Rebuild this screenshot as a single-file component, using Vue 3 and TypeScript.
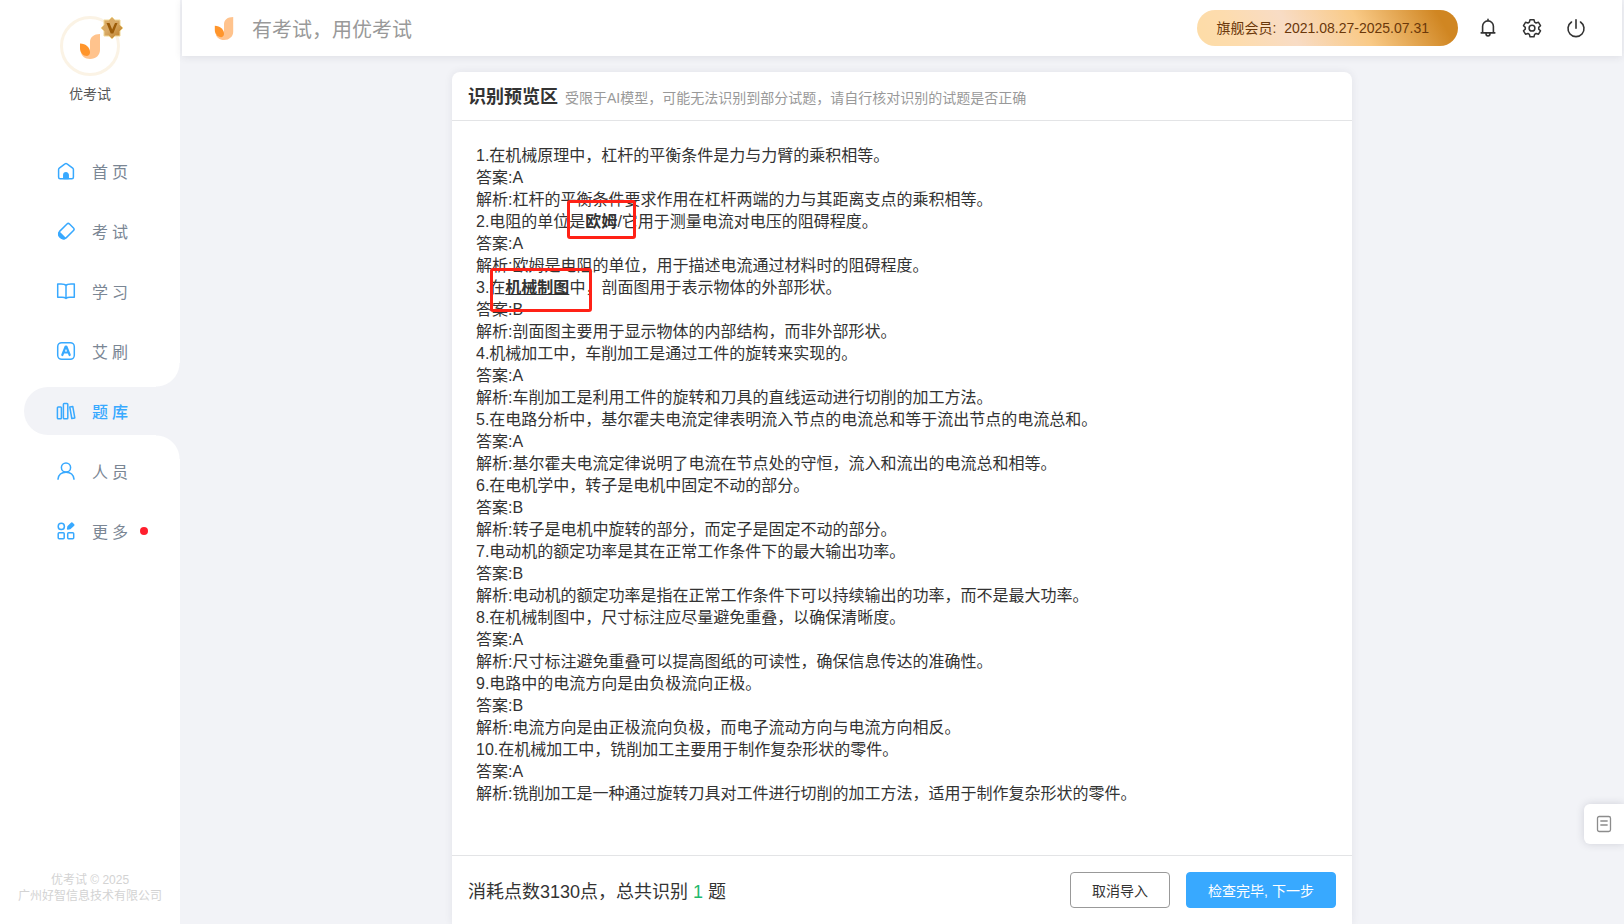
<script setup lang="ts">
interface NavItem {
  label: string
  icon: string
  active?: boolean
  dot?: boolean
}

const navItems: NavItem[] = [
  { label: '首页', icon: 'home' },
  { label: '考试', icon: 'exam' },
  { label: '学习', icon: 'study' },
  { label: '艾刷', icon: 'drill' },
  { label: '题库', icon: 'bank', active: true },
  { label: '人员', icon: 'people' },
  { label: '更多', icon: 'more', dot: true },
]

interface Segment {
  text: string
  mark?: string
}

const lines: Segment[][] = [
  [{ text: '1.在机械原理中，杠杆的平衡条件是力与力臂的乘积相等。' }],
  [{ text: '答案:A' }],
  [{ text: '解析:杠杆的平衡条件要求作用在杠杆两端的力与其距离支点的乘积相等。' }],
  [
    { text: '2.电阻的单位是' },
    { text: '欧姆', mark: 'mark-unit' },
    { text: '/它用于测量电流对电压的阻碍程度。' },
  ],
  [{ text: '答案:A' }],
  [{ text: '解析:欧姆是电阻的单位，用于描述电流通过材料时的阻碍程度。' }],
  [
    { text: '3.在' },
    { text: '机械制图', mark: 'mark-drawing' },
    { text: '中，剖面图用于表示物体的外部形状。' },
  ],
  [{ text: '答案:B' }],
  [{ text: '解析:剖面图主要用于显示物体的内部结构，而非外部形状。' }],
  [{ text: '4.机械加工中，车削加工是通过工件的旋转来实现的。' }],
  [{ text: '答案:A' }],
  [{ text: '解析:车削加工是利用工件的旋转和刀具的直线运动进行切削的加工方法。' }],
  [{ text: '5.在电路分析中，基尔霍夫电流定律表明流入节点的电流总和等于流出节点的电流总和。' }],
  [{ text: '答案:A' }],
  [{ text: '解析:基尔霍夫电流定律说明了电流在节点处的守恒，流入和流出的电流总和相等。' }],
  [{ text: '6.在电机学中，转子是电机中固定不动的部分。' }],
  [{ text: '答案:B' }],
  [{ text: '解析:转子是电机中旋转的部分，而定子是固定不动的部分。' }],
  [{ text: '7.电动机的额定功率是其在正常工作条件下的最大输出功率。' }],
  [{ text: '答案:B' }],
  [{ text: '解析:电动机的额定功率是指在正常工作条件下可以持续输出的功率，而不是最大功率。' }],
  [{ text: '8.在机械制图中，尺寸标注应尽量避免重叠，以确保清晰度。' }],
  [{ text: '答案:A' }],
  [{ text: '解析:尺寸标注避免重叠可以提高图纸的可读性，确保信息传达的准确性。' }],
  [{ text: '9.电路中的电流方向是由负极流向正极。' }],
  [{ text: '答案:B' }],
  [{ text: '解析:电流方向是由正极流向负极，而电子流动方向与电流方向相反。' }],
  [{ text: '10.在机械加工中，铣削加工主要用于制作复杂形状的零件。' }],
  [{ text: '答案:A' }],
  [{ text: '解析:铣削加工是一种通过旋转刀具对工件进行切削的加工方法，适用于制作复杂形状的零件。' }],
]
</script>

<template>
  <div class="app">
    <aside class="sidebar">
      <div class="profile">
        <div class="avatar">
          <svg class="avatar-logo" viewBox="0 0 20 25" aria-hidden="true">
            <path d="M20 0v16c0 5-4 9-10 9-5 0-8-3-9-6 5 2 9-1 9-5V8c0-5 4-8 10-8z" fill="#ffc38d" />
            <path d="M0 9.500c6 0 10 4 10 9 0 1.500-1 3-3 3.500-4 0-7-3.500-7-7.500z" fill="#ff952b" />
          </svg>
          <svg class="badge" viewBox="0 0 24 24" aria-hidden="true">
            <defs>
              <linearGradient id="badge-gold" x1="0" y1="0" x2="1" y2="1">
                <stop offset="0" stop-color="#dda95c" />
                <stop offset=".45" stop-color="#d9ab68" />
                <stop offset="1" stop-color="#b9771a" />
              </linearGradient>
            </defs>
            <path d="M12 1l3 3h5v5l3 3-3 3v5h-5l-3 3-3-3H4v-5l-3-3 3-3V4h5z" fill="url(#badge-gold)" stroke="#f0d898" stroke-width="1" />
            <path d="M6.500 7h3l2.700 6.500L15 7h2.500l-4.200 10.500h-2.600z" fill="#9c5c08" />
          </svg>
        </div>
        <div class="profile-name">优考试</div>
      </div>

      <nav class="nav">
        <a v-for="item in navItems" :key="item.label" href="#" class="nav-item" :class="{ active: item.active }">
          <svg class="nav-icon" viewBox="0 0 20 20" fill="none" stroke="#38a9ff" stroke-width="1.500" stroke-linejoin="round" stroke-linecap="round" aria-hidden="true">
            <template v-if="item.icon === 'home'">
              <path d="M2.600 8.500c0-.6.2-1 .7-1.400L9 2.900a1.600 1.600 0 0 1 2 0l5.700 4.200c.5.4.7.8.7 1.400v7.700a1.500 1.500 0 0 1-1.500 1.500H4.100a1.500 1.500 0 0 1-1.500-1.500z" />
              <path d="M7.800 17.500V14a2.200 2.200 0 0 1 4.400 0v3.500z" fill="#38a9ff" />
            </template>
            <template v-else-if="item.icon === 'exam'">
              <path d="M3.600 10.400L11 3a1.800 1.800 0 0 1 2.500 0l4 4a1.800 1.800 0 0 1 0 2.500l-7.400 7.400c-1.700 1.200-4.200 1-5.800-.6-1.600-1.700-2-4.200-.7-5.900z" />
              <path d="M3.300 11.200l6 6c-1.600.7-3.600.4-5-.9-1.400-1.400-1.700-3.500-1-5.100z" fill="#38a9ff" />
            </template>
            <template v-else-if="item.icon === 'study'">
              <path d="M10 4.500C9 3 7 3 5 3H1.700v13.300H6c2 0 3 .2 4 1.200 1-1 2-1.200 4-1.200h4.300V3H15c-2 0-4 0-5 1.500zM10 4.500v13" />
            </template>
            <template v-else-if="item.icon === 'drill'">
              <rect x="1.700" y="1.700" width="16.600" height="16.600" rx="4" />
              <path d="M6.300 14L9.700 5.500h.6L13.700 14M7.600 11.500h4.800" stroke-width="2.200" />
            </template>
            <template v-else-if="item.icon === 'bank'">
              <rect x="1.400" y="5.900" width="4" height="11.800" rx=".8" />
              <rect x="7.400" y="2.500" width="4.400" height="15.200" rx=".8" />
              <path d="M13.800 6.100l3-.5 2 11.300-3 .6z" />
            </template>
            <template v-else-if="item.icon === 'people'">
              <circle cx="10" cy="6.500" r="4.600" />
              <path d="M2 18.200c.5-4.500 3.500-7 8-7s7.500 2.500 8 7" />
            </template>
            <template v-else>
              <circle cx="5.300" cy="5.400" r="3.100" />
              <rect x="2.200" y="11.700" width="6" height="6" rx="1" />
              <rect x="11.700" y="11.700" width="6" height="6" rx="1" />
              <path d="M11.800 7.800l.4-2.100 3.600-3.500 1.800 1.800L14 7.400z" fill="#38a9ff" stroke-width="1.800" />
            </template>
          </svg>
          <span class="nav-label">{{ item.label }}</span>
          <span v-if="item.dot" class="dot"></span>
        </a>
      </nav>

      <footer class="copyright">
        <div>优考试 © 2025</div>
        <div>广州好智信息技术有限公司</div>
      </footer>
    </aside>

    <div class="content">
      <header class="topbar">
        <svg class="brand-logo" viewBox="0 0 20 25" aria-hidden="true">
          <path d="M20 0v16c0 5-4 9-10 9-5 0-8-3-9-6 5 2 9-1 9-5V8c0-5 4-8 10-8z" fill="#ffc38d" />
          <path d="M0 9.500c6 0 10 4 10 9 0 1.500-1 3-3 3.500-4 0-7-3.500-7-7.500z" fill="#ff952b" />
        </svg>
        <span class="slogan">有考试，用优考试</span>
        <div class="member">旗舰会员:&nbsp; 2021.08.27-2025.07.31</div>
        <div class="actions">
          <button type="button" class="icon-button" aria-label="通知">
            <svg viewBox="0 0 20 20" fill="none" stroke="#333" stroke-width="1.600" stroke-linejoin="round" stroke-linecap="round">
              <path d="M10 1.400v1.300M4.600 14.800V8.300a5.400 5.400 0 0 1 10.800 0v6.500M3.200 14.900h13.600M8 15.500c0 3.200 4 3.200 4 0" />
            </svg>
          </button>
          <button type="button" class="icon-button" aria-label="设置">
            <svg viewBox="0 0 20 20" fill="none" stroke="#333" stroke-width="1.500" stroke-linejoin="round">
              <path d="M8 1.700h4l.6 2.400 1.500.9 2.400-.7 2 3.400-1.800 1.700v1.700l1.800 1.700-2 3.400-2.400-.7-1.500.9-.6 2.400H8l-.6-2.400-1.500-.9-2.400.7-2-3.400 1.800-1.700V9.400L1.500 7.700l2-3.400 2.400.7 1.500-.9z" />
              <circle cx="10" cy="10.200" r="2.900" />
            </svg>
          </button>
          <button type="button" class="icon-button" aria-label="退出">
            <svg viewBox="0 0 20 20" fill="none" stroke="#333" stroke-width="1.600" stroke-linecap="round">
              <path d="M10 1.800v8.500M5.500 4a8 8 0 1 0 9 0" />
            </svg>
          </button>
        </div>
      </header>

      <main class="main">
        <section class="card">
          <div class="card-head">
            <h1>识别预览区</h1>
            <p>受限于AI模型，可能无法识别到部分试题，请自行核对识别的试题是否正确</p>
          </div>
          <div class="card-body">
            <div v-for="(line, i) in lines" :key="i" class="line">
              <span v-for="(seg, j) in line" :key="j" :class="seg.mark ? ['mark', seg.mark] : ''">{{ seg.text }}</span>
            </div>
          </div>
          <div class="card-foot">
            <div class="summary">消耗点数3130点，总共识别 <span class="count">1</span> 题</div>
            <button type="button" class="btn btn-plain">取消导入</button>
            <button type="button" class="btn btn-primary">检查完毕, 下一步</button>
          </div>
        </section>
      </main>
    </div>

    <button type="button" class="float-button" aria-label="记录">
      <svg viewBox="0 0 16 18" fill="none" stroke="#8c8c8c" stroke-width="1.300" stroke-linecap="round">
        <rect x="1.500" y="1.500" width="13" height="15" rx="1.800" />
        <path d="M4.800 6h6.400M4.800 10h6.400" />
      </svg>
    </button>
  </div>
</template>

<style>
body {
  background: #f2f3f7;
}
</style>

<style scoped>
.app {
  display: flex;
  height: 100vh;
  overflow: hidden;
  background: #f2f3f7;
  color: #333;
  font-family: "Liberation Sans", "Noto Sans CJK SC", sans-serif;
  font-size: 14px;
}

button {
  font-family: inherit;
  cursor: pointer;
}

.sidebar {
  display: flex;
  flex: none;
  flex-direction: column;
  width: 180px;
  background: #fff;
}

.profile {
  display: flex;
  flex-direction: column;
  align-items: center;
  padding-top: 16px;
  height: 125px;
}

.avatar {
  position: relative;
  display: flex;
  align-items: center;
  justify-content: center;
  box-sizing: border-box;
  width: 60px;
  height: 60px;
  border: 3px solid #fbf3e5;
  border-radius: 50%;
}

.avatar-logo {
  width: 20px;
  height: 25px;
}

.badge {
  position: absolute;
  top: -3px;
  right: -7px;
  width: 24px;
  height: 24px;
}

.profile-name {
  margin-top: 8px;
  line-height: 20px;
  color: #555;
}

.nav {
  display: flex;
  flex-direction: column;
  gap: 12px;
  padding: 6px 0 0 24px;
}

.nav-item {
  position: relative;
  display: flex;
  align-items: center;
  height: 48px;
  padding-left: 32px;
  color: #7a8694;
  text-decoration: none;
}

.nav-icon {
  width: 20px;
  height: 20px;
  margin-right: 16px;
}

.nav-label {
  font-size: 16px;
  letter-spacing: 4px;
}

.nav-item.active {
  border-radius: 24px 0 0 24px;
  background: #f2f3f7;
  color: #38a9ff;
  font-weight: 500;
}

.nav-item.active::before,
.nav-item.active::after {
  content: "";
  position: absolute;
  right: 0;
  width: 24px;
  height: 24px;
}

.nav-item.active::before {
  bottom: 100%;
  background: radial-gradient(circle at 0 0, #fff 23px, #f2f3f7 24px);
}

.nav-item.active::after {
  top: 100%;
  background: radial-gradient(circle at 0 100%, #fff 23px, #f2f3f7 24px);
}

.dot {
  width: 8px;
  height: 8px;
  margin-left: 8px;
  border-radius: 50%;
  background: #ff1f2d;
}

.copyright {
  margin-top: auto;
  padding-bottom: 20px;
  color: #d3d3d3;
  font-size: 12px;
  line-height: 16px;
  text-align: center;
}

.content {
  display: flex;
  flex: 1;
  flex-direction: column;
  min-width: 0;
  padding: 0 2px;
}

.topbar {
  display: flex;
  flex: none;
  align-items: center;
  height: 56px;
  padding: 0 36px 0 32px;
  background: #fff;
  box-shadow: 0 1px 8px rgba(40, 40, 60, 0.1);
}

.brand-logo {
  width: 20px;
  height: 23px;
}

.slogan {
  margin-left: 18px;
  color: #999;
  font-size: 20px;
}

.member {
  box-sizing: border-box;
  height: 36px;
  margin-left: auto;
  padding: 0 29px 0 20px;
  border-radius: 18px;
  background: linear-gradient(60deg, #fddca6 0%, #fddcae 16%, #f8dcc5 36%, #f9ca87 62%, #d08622 92%, #d08622 100%);
  color: #6b380a;
  line-height: 36px;
}

.actions {
  display: flex;
  gap: 24px;
  margin-left: 20px;
}

.icon-button {
  width: 20px;
  height: 20px;
  padding: 0;
  border: 0;
  background: none;
}

.icon-button svg {
  display: block;
  width: 20px;
  height: 20px;
}

.main {
  display: flex;
  flex: 1;
  justify-content: center;
  min-height: 0;
  padding-top: 16px;
}

.card {
  display: flex;
  flex-direction: column;
  width: 100%;
  max-width: 900px;
  border-radius: 8px 8px 0 0;
  background: #fff;
  box-shadow: 0 0 8px rgba(40, 40, 60, 0.08);
}

.card-head {
  display: flex;
  align-items: baseline;
  gap: 7px;
  box-sizing: border-box;
  height: 49px;
  padding: 13px 16px 0;
  border-bottom: 1px solid #e3e4e6;
}

.card-head h1 {
  margin: 0;
  font-size: 18px;
  line-height: 24px;
}

.card-head p {
  margin: 0;
  color: #999;
  line-height: 24px;
}

.card-body {
  flex: 1;
  min-height: 0;
  padding: 24px;
  font-size: 16px;
  line-height: 22px;
}

.line {
  height: 22px;
  white-space: nowrap;
}

.mark {
  position: relative;
  display: inline-block;
  height: 22px;
  font-weight: 700;
}

.mark::after {
  content: "";
  position: absolute;
  border: 3px solid #ff2116;
  border-radius: 3px;
}

.mark-unit::after {
  inset: -11px -19px -6px -18px;
}

.mark-drawing {
  text-decoration: underline;
}

.mark-drawing::after {
  inset: -9px -23px -13px -15px;
}

.card-foot {
  display: flex;
  align-items: center;
  gap: 16px;
  padding: 16px;
  border-top: 1px solid #e3e4e6;
}

.summary {
  flex: 1;
  font-size: 18px;
}

.count {
  color: #1fb96c;
}

.btn {
  box-sizing: border-box;
  height: 36px;
  padding: 0;
  border: 1px solid #999;
  border-radius: 4px;
  font-size: 14px;
}

.btn-plain {
  width: 100px;
  background: #fff;
  color: #333;
}

.btn-primary {
  width: 150px;
  border-color: #38a9ff;
  background: #38a9ff;
  color: #fff;
}

.float-button {
  position: fixed;
  right: 0;
  bottom: 80px;
  display: flex;
  align-items: center;
  justify-content: center;
  width: 40px;
  height: 40px;
  padding: 0;
  border: 0;
  border-radius: 6px 0 0 6px;
  background: #fff;
  box-shadow: 0 0 8px rgba(40, 40, 60, 0.16);
}

.float-button svg {
  width: 16px;
  height: 18px;
}
</style>
